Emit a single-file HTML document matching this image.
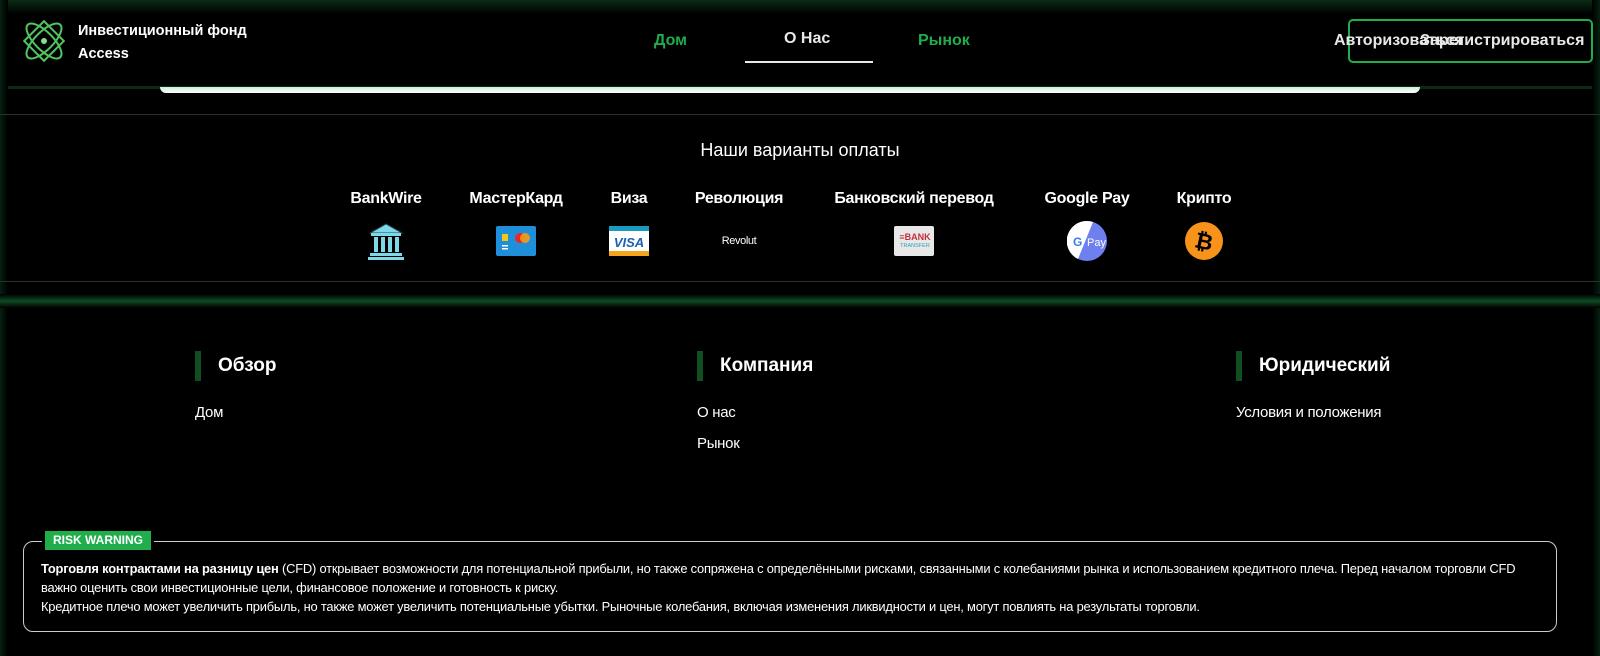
<!DOCTYPE html>
<html><head><meta charset="utf-8"><style>
*{margin:0;padding:0;box-sizing:border-box}
body{width:1600px;height:656px;background:#000;color:#fff;font-family:"Liberation Sans",sans-serif;position:relative;overflow:hidden}
.a{position:absolute}
.lbl{position:absolute;top:190px;font-weight:bold;font-size:16px;transform:translateX(-50%);white-space:nowrap;letter-spacing:-0.3px}
.ic{position:absolute;transform:translate(-50%,-50%);top:241px}
.fh{position:absolute;top:351px;font-weight:bold;font-size:19px;padding-left:17px;border-left:6px solid #0f4f22;line-height:30px}
.fl{position:absolute;font-size:15px;letter-spacing:-0.3px}
</style></head><body>
<div class="a" style="left:0;top:0;width:1600px;height:14px;background:linear-gradient(#0b2a16,#000)"></div>
<div class="a" style="left:0;top:86px;width:1600px;height:3px;background:#0a2a14"></div>
<div class="a" style="left:0;top:0;width:8px;height:656px;background:linear-gradient(90deg,#052010,#000)"></div>
<div class="a" style="right:0;top:0;width:8px;height:656px;background:linear-gradient(270deg,#052010,#000)"></div>
<svg class="a" style="left:20px;top:17px" width="48" height="48" viewBox="0 0 48 48" fill="none" stroke="#4fc45f" stroke-width="2">
<rect x="10" y="10" width="28" height="28" transform="rotate(45 24 24)"/>
<ellipse cx="24" cy="24" rx="23" ry="9" transform="rotate(45 24 24)"/>
<ellipse cx="24" cy="24" rx="23" ry="9" transform="rotate(-45 24 24)"/>
<circle cx="24" cy="24" r="3" fill="#7ee08a" stroke="none"/></svg>
<div class="a" style="left:78px;top:20px;font-weight:bold;font-size:14.5px;line-height:23px">Инвестиционный фонд<br>Access</div>
<div class="a" style="left:654px;top:32px;font-weight:bold;font-size:16px;color:#1fae4b">Дом</div>
<div class="a" style="left:784px;top:30px;font-weight:bold;font-size:16px;color:#e8e8e8">О Нас</div>
<div class="a" style="left:745px;top:61px;width:128px;height:2px;background:#e8e8e8"></div>
<div class="a" style="left:918px;top:32px;font-weight:bold;font-size:16px;color:#1fae4b">Рынок</div>
<div class="a" style="left:1348px;top:19px;width:245px;height:44px;border:2px solid #1fae4b;border-radius:5px"></div>
<div class="a" style="left:1334px;top:32px;font-weight:bold;font-size:16px;color:#e8e8e8;white-space:nowrap">Авторизоваться</div>
<div class="a" style="left:1420px;top:32px;font-weight:bold;font-size:16px;color:#e8e8e8;white-space:nowrap">Зарегистрироваться</div>
<div class="a" style="left:160px;top:87px;width:1260px;height:6px;background:linear-gradient(#cfeedd,#fff);border-radius:0 0 8px 8px"></div>
<div class="a" style="left:0;top:114px;width:1600px;height:1px;background:#2e2e2e"></div>
<div class="a" style="left:0;top:140px;width:1600px;text-align:center;font-size:18px">Наши варианты оплаты</div>
<div class="lbl" style="left:386px">BankWire</div>
<div class="lbl" style="left:516px">МастерКард</div>
<div class="lbl" style="left:629px">Виза</div>
<div class="lbl" style="left:739px">Революция</div>
<div class="lbl" style="left:914px">Банковский перевод</div>
<div class="lbl" style="left:1087px">Google Pay</div>
<div class="lbl" style="left:1204px">Крипто</div>
<svg class="ic" style="left:386px" width="40" height="38" viewBox="0 0 40 38"><path d="M20 2L4 11h32z" fill="#7fd8e8" stroke="#1a4a55"/><rect x="5" y="11" width="30" height="3" fill="#7fd8e8"/><rect x="8" y="15" width="4" height="15" fill="#7fd8e8"/><rect x="15" y="15" width="4" height="15" fill="#7fd8e8"/><rect x="22" y="15" width="4" height="15" fill="#7fd8e8"/><rect x="29" y="15" width="4" height="15" fill="#7fd8e8"/><rect x="4" y="31" width="32" height="3" fill="#7fd8e8"/><rect x="2" y="35" width="36" height="3" fill="#7fd8e8"/></svg>
<svg class="ic" style="left:516px" width="40" height="30" viewBox="0 0 40 30"><rect width="40" height="30" rx="2" fill="#1e8fd8"/><rect x="6" y="8" width="6" height="7" fill="#f5c518"/><circle cx="24" cy="12" r="5" fill="#e8262a"/><circle cx="29" cy="12" r="5" fill="#f59c18" opacity=".9"/><rect x="6" y="19" width="6" height="1.5" fill="#fff"/><rect x="6" y="22" width="6" height="1.5" fill="#fff"/></svg>
<svg class="ic" style="left:629px" width="40" height="30" viewBox="0 0 40 30"><rect width="40" height="30" rx="2" fill="#fff"/><rect width="40" height="5" fill="#1a9ac0"/><rect y="25" width="40" height="5" fill="#f4a51c"/><text x="20" y="21" text-anchor="middle" font-family="Liberation Sans" font-weight="bold" font-style="italic" font-size="13" fill="#1a5fb4">VISA</text></svg>
<div class="ic" style="left:739px;font-size:11px;letter-spacing:-0.4px">Revolut</div>
<svg class="ic" style="left:914px" width="40" height="30" viewBox="0 0 40 30"><rect width="40" height="30" rx="2" fill="#e8e8e8"/><text x="21" y="14" text-anchor="middle" font-family="Liberation Sans" font-weight="bold" font-size="9" fill="#c0303a">≡BANK</text><text x="21" y="21" text-anchor="middle" font-family="Liberation Sans" font-size="5.5" fill="#2aa0b0">TRANSFER</text></svg>
<svg class="ic" style="left:1087px" width="40" height="40" viewBox="0 0 40 40"><circle cx="20" cy="20" r="20" fill="#6e7ff0"/><path d="M20 0A20 20 0 0 0 11 38L26 1A20 20 0 0 0 20 0z" fill="#fff"/><text x="6" y="25" font-family="Liberation Sans" font-weight="bold" font-size="12" fill="#3a7be8">G</text><text x="20" y="25" font-family="Liberation Sans" font-size="11" fill="#fff">Pay</text></svg>
<svg class="ic" style="left:1204px" width="38" height="38" viewBox="0 0 38 38"><circle cx="19" cy="19" r="19" fill="#f7931a"/><text x="19" y="27" text-anchor="middle" font-family="Liberation Sans" font-weight="bold" font-size="22" fill="#000" transform="rotate(12 19 19)">₿</text></svg>
<div class="a" style="left:0;top:281px;width:1600px;height:1px;background:#2e2e2e"></div>
<div class="a" style="left:0;top:294px;width:1600px;height:14px;background:linear-gradient(#000,#0e4a22 50%,#000)"></div>
<div class="fh" style="left:195px">Обзор</div>
<div class="fh" style="left:697px">Компания</div>
<div class="fh" style="left:1236px">Юридический</div>
<div class="fl" style="left:195px;top:404px">Дом</div>
<div class="fl" style="left:697px;top:404px">О нас</div>
<div class="fl" style="left:697px;top:435px">Рынок</div>
<div class="fl" style="left:1236px;top:404px">Условия и положения</div>
<div class="a" style="left:23px;top:541px;width:1534px;height:91px;border:1px solid #ccc;border-radius:10px"></div>
<div class="a" style="left:45px;top:531px;height:19px;padding:0 8px;background:#1fae4b;color:#fff;font-weight:bold;font-size:12px;line-height:19px;outline:3px solid #000">RISK WARNING</div>
<div class="a" style="left:41px;top:559px;width:1510px;font-size:12.9px;line-height:19px;letter-spacing:-0.2px"><b>Торговля контрактами на разницу цен</b> (CFD) открывает возможности для потенциальной прибыли, но также сопряжена с определёнными рисками, связанными с колебаниями рынка и использованием кредитного плеча. Перед началом торговли CFD важно оценить свои инвестиционные цели, финансовое положение и готовность к риску.<br>Кредитное плечо может увеличить прибыль, но также может увеличить потенциальные убытки. Рыночные колебания, включая изменения ликвидности и цен, могут повлиять на результаты торговли.</div>
</body></html>
